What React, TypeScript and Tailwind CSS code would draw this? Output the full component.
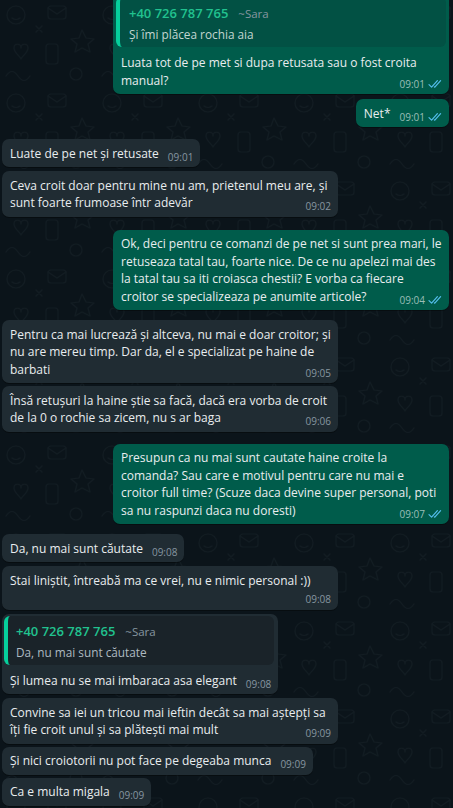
import { Fragment } from "react";
import clsx from "clsx";

type Quote = { name: string; alias: string; text: string };

type Msg = {
  out?: boolean;
  lines: string[];
  time: string;
  wide?: boolean;
  quote?: Quote;
  timeBelow?: boolean;
  gap: string;
};

const messages: Msg[] = [
  {
    out: true,
    wide: true,
    quote: { name: "+40 726 787 765", alias: "~Sara", text: "Și îmi plăcea rochia aia" },
    lines: ["Luata tot de pe met si dupa retusata sau o fost croita", "manual?"],
    time: "09:01",
    gap: "mt-0",
  },
  { out: true, lines: ["Net*"], time: "09:01", gap: "mt-[5px]" },
  { lines: ["Luate de pe net și retusate"], time: "09:01", gap: "mt-[12px]" },
  {
    wide: true,
    lines: ["Ceva croit doar pentru mine nu am, prietenul meu are, și", "sunt foarte frumoase într adevăr"],
    time: "09:02",
    gap: "mt-[4px]",
  },
  {
    out: true,
    wide: true,
    lines: [
      "Ok, deci pentru ce comanzi de pe net si sunt prea mari, le",
      "retuseaza tatal tau, foarte nice. De ce nu apelezi mai des",
      "la tatal tau sa iti croiasca chestii? E vorba ca fiecare",
      "croitor se specializeaza pe anumite articole?",
    ],
    time: "09:04",
    gap: "mt-[13px]",
  },
  {
    wide: true,
    lines: [
      "Pentru ca mai lucrează și altceva, nu mai e doar croitor; și",
      "nu are mereu timp. Dar da, el e specializat pe haine de",
      "barbati",
    ],
    time: "09:05",
    gap: "mt-[10px]",
  },
  {
    wide: true,
    lines: ["Însă retușuri la haine știe sa facă, dacă era vorba de croit", "de la 0 o rochie sa zicem, nu s ar baga"],
    time: "09:06",
    gap: "mt-[3px]",
  },
  {
    out: true,
    wide: true,
    lines: [
      "Presupun ca nu mai sunt cautate haine croite la",
      "comanda? Sau care e motivul pentru care nu mai e",
      "croitor full time? (Scuze daca devine super personal, poti",
      "sa nu raspunzi daca nu doresti)",
    ],
    time: "09:07",
    gap: "mt-[12px]",
  },
  { lines: ["Da, nu mai sunt căutate"], time: "09:08", gap: "mt-[10px]" },
  {
    wide: true,
    timeBelow: true,
    lines: ["Stai liniștit, întreabă ma ce vrei, nu e nimic personal :))"],
    time: "09:08",
    gap: "mt-[4px]",
  },
  {
    quote: { name: "+40 726 787 765", alias: "~Sara", text: "Da, nu mai sunt căutate" },
    lines: ["Și lumea nu se mai imbaraca asa elegant"],
    time: "09:08",
    gap: "mt-[4px]",
  },
  {
    wide: true,
    lines: ["Convine sa iei un tricou mai ieftin decât sa mai aștepți sa", "îți fie croit unul și sa plătești mai mult"],
    time: "09:09",
    gap: "mt-[4px]",
  },
  { lines: ["Și nici croiotorii nu pot face pe degeaba munca"], time: "09:09", gap: "mt-[3px]" },
  { lines: ["Ca e multa migala"], time: "09:09", gap: "mt-[3px]" },
];

// faint wallpaper doodles behind the chat
function Wallpaper() {
  return (
    <svg className="pointer-events-none absolute inset-0 h-full w-full" aria-hidden>
      <defs>
        <pattern id="doodles" width="96" height="88" patternUnits="userSpaceOnUse">
          <g fill="none" stroke="#121c22" strokeWidth="1.2" strokeLinecap="round" strokeLinejoin="round">
            <circle cx="16" cy="15" r="9" />
            <path d="M12 18 q4 3 8 0" />
            <rect x="48" y="6" width="18" height="13" rx="3" />
            <path d="M48 8 l9 6 l9 -6" />
            <path d="M82 30 l4 8 l8 1 l-6 5 l2 8 l-8 -4 l-7 4 l2 -8 l-6 -5 l8 -1 z" />
            <path d="M14 48 c0 -5 7 -5 7 0 c0 -5 7 -5 7 0 c0 5 -7 9 -7 11 c0 -2 -7 -6 -7 -11 z" />
            <rect x="46" y="44" width="12" height="20" rx="3" />
            <circle cx="76" cy="74" r="6" />
            <path d="M6 76 q6 -9 12 0 t12 0" />
            <path d="M36 26 l6 6 m0 -6 l-6 6" />
          </g>
        </pattern>
      </defs>
      <rect width="100%" height="100%" fill="url(#doodles)" />
    </svg>
  );
}

function DoubleCheck() {
  return (
    <svg width="14" height="10" viewBox="0 0 14 10" fill="none" className="ml-[3px] block">
      <path d="M1 5.6 L3.6 8.2 L9.4 1.6" stroke="#53bdeb" strokeWidth="1.2" strokeLinecap="round" strokeLinejoin="round" />
      <path d="M6.4 7.9 L6.8 8.2 L12.6 1.6" stroke="#53bdeb" strokeWidth="1.2" strokeLinecap="round" strokeLinejoin="round" />
    </svg>
  );
}

function Time({ msg }: { msg: Msg }) {
  return (
    <span
      className={clsx(
        "flex items-center text-[10px] leading-[11px]",
        msg.out ? "text-[#99beb7]" : "text-[#8696a0]"
      )}
    >
      {msg.time}
      {msg.out && <DoubleCheck />}
    </span>
  );
}

function QuoteBox({ quote, out }: { quote: Quote; out?: boolean }) {
  return (
    <div
      className={clsx(
        "rounded-[6px] border-l-[4px] border-[#06cf9c] pr-[10px] pb-[3px]",
        out ? "mx-[3px] mt-[3px] bg-[#025144] pl-[9px] pt-[6px]" : "ml-[2px] mr-[4px] mt-[2px] bg-[#1a2329] pl-[8px] pt-[5px]"
      )}
    >
      <div className="flex items-baseline leading-[20px]">
        <span className="text-[13px] font-semibold text-[#21c28f]">{quote.name}</span>
        <span className="ml-[10px] text-[11.5px] text-[#8696a0]">{quote.alias}</span>
      </div>
      <div className={clsx("text-[11.8px] leading-[20px]", out ? "text-[#c3d6d1]" : "text-[#aebac1]")}>
        {quote.text}
      </div>
    </div>
  );
}

function Bubble({ msg }: { msg: Msg }) {
  return (
    <div
      className={clsx(
        "rounded-[7px] shadow-[0_1px_0.5px_rgba(0,0,0,0.35)]",
        msg.out ? "self-end bg-[#005c4b]" : "self-start bg-[#202c33]",
        msg.wide ? "w-[336px]" : "max-w-[336px]",
        msg.gap
      )}
    >
      {msg.quote && <QuoteBox quote={msg.quote} out={msg.out} />}
      <div
        className={clsx(
          "flow-root pl-[8px] pr-[7px] pb-[4.5px] leading-[17.5px]",
          msg.quote ? "pt-[7px]" : "pt-[5.5px]"
        )}
      >
        {msg.lines.map((line, i) => (
          <Fragment key={i}>
            <span className="whitespace-nowrap">{line}</span>
            {i < msg.lines.length - 1 && <br />}
          </Fragment>
        ))}
        {msg.timeBelow ? (
          <div className="mt-[5px] flex justify-end">
            <Time msg={msg} />
          </div>
        ) : (
          <span className="float-right ml-[9px] mt-[7px] flex leading-[11px]">
            <Time msg={msg} />
          </span>
        )}
      </div>
    </div>
  );
}

export default function App() {
  return (
    <div className="relative h-[808px] w-[453px] overflow-hidden bg-[#0b141a] font-['Open_Sans',sans-serif] text-[12px] text-[#e9edef]">
      <Wallpaper />
      <div className="relative -mt-[6px] flex flex-col pl-[2px] pr-[4px]">
        {messages.map((m, i) => (
          <Bubble key={i} msg={m} />
        ))}
      </div>
    </div>
  );
}
